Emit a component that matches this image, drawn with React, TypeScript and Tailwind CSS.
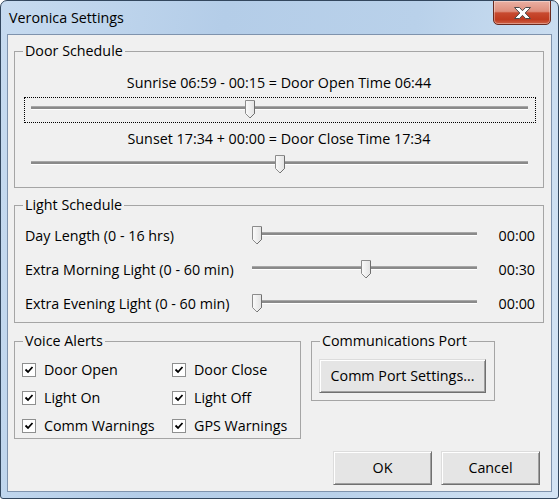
import type { ReactNode } from "react"

const font = "font-['Open_Sans',sans-serif] text-[14.3px] leading-[20px] text-black"

function Thumb() {
  return (
    <svg width="11" height="19" viewBox="0 0 11 19">
      <defs>
        <linearGradient id="thumbFill" x1="0" y1="0" x2="1" y2="0">
          <stop offset="0" stopColor="#fbfbfb" />
          <stop offset="1" stopColor="#e2e2e2" />
        </linearGradient>
      </defs>
      <path
        d="M0.5 0.5 H9.5 V13.5 L5 18 L0.5 13.5 Z"
        fill="url(#thumbFill)"
        stroke="#8c8c8c"
      />
      <path d="M9.5 1 V13.5 L5 18" fill="none" stroke="#6f6f6f" />
    </svg>
  )
}

function Slider({ thumbLeft }: { thumbLeft: number }) {
  return (
    <div className="relative h-[19px] w-full">
      <div className="absolute left-0 right-0 top-[6px] h-[4px] border-t border-t-[#a7a7a7] border-b border-b-white bg-[#8a8a8a]" />
      <div className="absolute top-0" style={{ left: thumbLeft }}>
        <Thumb />
      </div>
    </div>
  )
}

function Group({
  title,
  className,
  children
}: {
  title: string
  className: string
  children: ReactNode
}) {
  return (
    <fieldset className={`border border-[#a5a5a5] ${className}`}>
      <legend className="ml-[8px] px-[2px] leading-[20px]">{title}</legend>
      {children}
    </fieldset>
  )
}

function CheckItem({ label }: { label: string }) {
  return (
    <div className="flex h-[28px] items-center">
      <div className="flex h-[14px] w-[14px] items-center justify-center border border-[#8e8f8f] bg-white">
        <svg width="10" height="10" viewBox="0 0 10 10">
          <path d="M1.5 4.5 L4 7 L8.5 2" fill="none" stroke="#000" strokeWidth="1.8" />
        </svg>
      </div>
      <span className="ml-[8px]">{label}</span>
    </div>
  )
}

function WinButton({ label, className }: { label: string; className: string }) {
  return (
    <button
      type="button"
      className={`flex items-center justify-center border border-t-[#dcdcdc] border-l-[#dcdcdc] border-r-[#707070] border-b-[#707070] bg-[#e5e5e5] shadow-[inset_1px_1px_0_#ffffff,inset_-1px_-1px_0_#a0a0a0] ${className}`}
    >
      {label}
    </button>
  )
}

function LightRow({ label, thumbLeft, value }: { label: string; thumbLeft: number; value: string }) {
  return (
    <div className="flex h-[34px] items-center pl-[10px] pr-[8px]">
      <span className="w-[227px]">{label}</span>
      <div className="mt-[-2px] w-[225px]">
        <Slider thumbLeft={thumbLeft} />
      </div>
      <span className="ml-auto">{value}</span>
    </div>
  )
}

export default function App() {
  return (
    <div className={`${font} flex h-[499px] w-[559px] flex-col overflow-hidden rounded-t-[7px] rounded-b-[3px] border border-[#33475e] bg-[linear-gradient(100deg,#c7dbf0_0%,#b4cde8_35%,#b9d1ea_65%,#d4e4f4_100%)]`}>
      <div className="flex h-[33px] shrink-0 items-start">
        <span className="ml-[8px] mt-[7px]">Veronica Settings</span>
        <div className="ml-auto mr-[7px] mt-[-1px] flex h-[25px] w-[58px] items-center justify-center rounded-b-[5px] border border-[#6a2a1f] bg-[linear-gradient(to_bottom,#eab0a3_0%,#de8e7c_45%,#c84a30_52%,#bf3a1f_80%,#cf6146_100%)] shadow-[inset_0_0_0_1px_rgba(255,255,255,0.35)]">
          <svg width="17" height="12" viewBox="0 0 17 12">
            <path
              d="M0.5 0.5 H5.5 L8.5 3.7 L11.5 0.5 H16.5 L11.2 6 L16.5 11.5 H11.5 L8.5 8.3 L5.5 11.5 H0.5 L5.8 6 Z"
              fill="#ffffff"
              stroke="#4a4a4a"
            />
          </svg>
        </div>
      </div>

      <div className="mx-[6px] mb-[6px] flex-1 border border-[#7f93ad] bg-[#f0f0f0] pl-[6px] pr-[7px]">
        <Group title="Door Schedule" className="mt-[6px] h-[147px]">
          <div className="mt-[12px] h-[20px] text-center">
            Sunrise 06:59 - 00:15 = Door Open Time 06:44
          </div>
          <div className="ml-[9px] mt-[4px] h-[26px] w-[512px] border border-dotted border-black pl-[6px] pr-[7px] pt-[2px]">
            <Slider thumbLeft={214} />
          </div>
          <div className="mt-[6px] h-[20px] text-center">
            Sunset 17:34 + 00:00 = Door Close Time 17:34
          </div>
          <div className="ml-[9px] mt-[3px] h-[26px] w-[512px] border border-transparent pl-[6px] pr-[7px] pt-[2px]">
            <Slider thumbLeft={244} />
          </div>
        </Group>

        <Group title="Light Schedule" className="mt-[7px] h-[128px]">
          <div className="mt-[4px]">
            <LightRow label="Day Length (0 - 16 hrs)" thumbLeft={0} value="00:00" />
            <LightRow label="Extra Morning Light (0 - 60 min)" thumbLeft={109} value="00:30" />
            <LightRow label="Extra Evening Light (0 - 60 min)" thumbLeft={0} value="00:00" />
          </div>
        </Group>

        <div className="mt-[8px] flex items-start">
          <Group title="Voice Alerts" className="h-[108px] w-[287px]">
            <div className="mt-[5px] grid grid-cols-[150px_1fr] pl-[7px]">
              <CheckItem label="Door Open" />
              <CheckItem label="Door Close" />
              <CheckItem label="Light On" />
              <CheckItem label="Light Off" />
              <CheckItem label="Comm Warnings" />
              <CheckItem label="GPS Warnings" />
            </div>
          </Group>
          <Group title="Communications Port" className="ml-[10px] h-[70px] w-[184px]">
            <WinButton label="Comm Port Settings..." className="ml-[7px] mt-[8px] h-[34px] w-[167px]" />
          </Group>
        </div>

        <div className="mt-[12px] flex justify-end gap-[9px] pr-[4px]">
          <WinButton label="OK" className="h-[34px] w-[99px]" />
          <WinButton label="Cancel" className="h-[34px] w-[99px]" />
        </div>
      </div>
    </div>
  )
}
